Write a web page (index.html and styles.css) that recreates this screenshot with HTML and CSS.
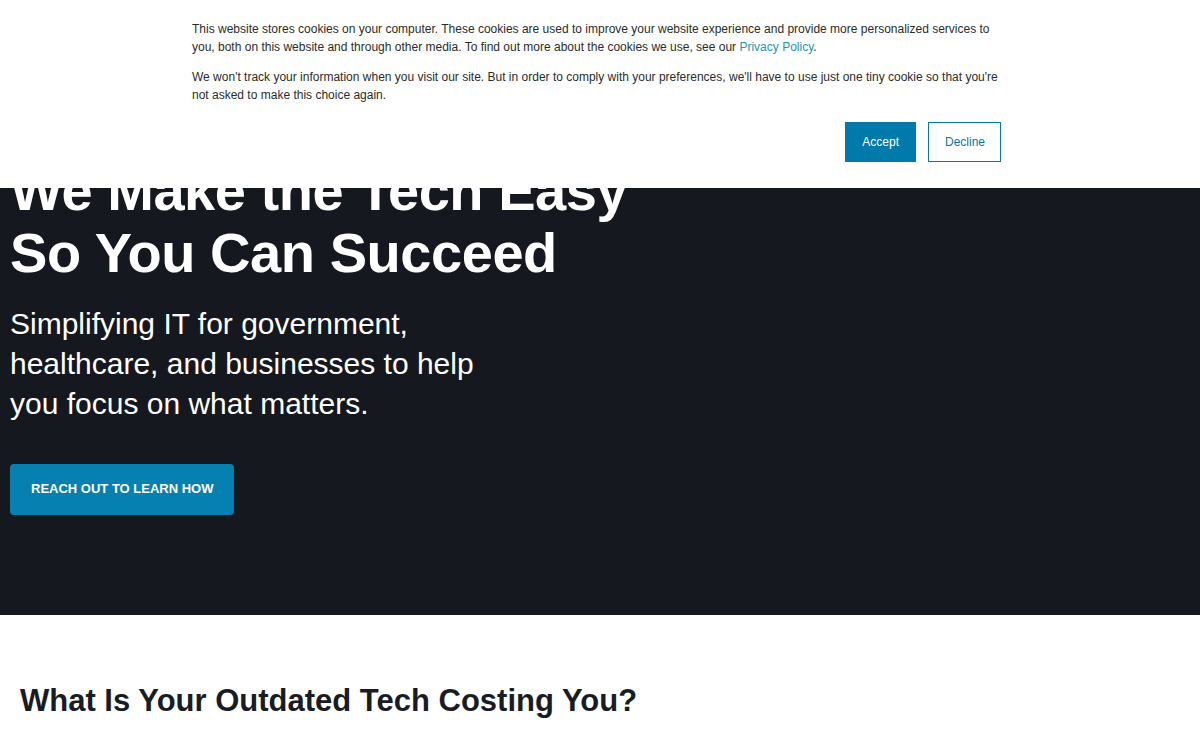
FILE: index.html
```html
<!DOCTYPE html>
<html lang="en">
<head>
<meta charset="utf-8">
<title>We Make the Tech Easy</title>
<link rel="stylesheet" href="styles.css">
</head>
<body>
<section class="hero">
  <h1 class="hero-title">We Make the Tech Easy<br>So You Can Succeed</h1>
  <p class="hero-sub">Simplifying IT for government,<br>healthcare, and businesses to help<br>you focus on what matters.</p>
  <a class="hero-btn" href="#">REACH OUT TO LEARN HOW</a>
</section>
<section class="costs">
  <h2 class="costs-title">What Is Your Outdated Tech Costing You?</h2>
</section>
<div class="cookie-banner">
  <div class="cookie-inner">
    <p class="cookie-text">This website stores cookies on your computer. These cookies are used to improve your website experience and provide more personalized services to you, both on this website and through other media. To find out more about the cookies we use, see our <a class="cookie-link" href="#">Privacy Policy</a>.</p>
    <p class="cookie-text">We won't track your information when you visit our site. But in order to comply with your preferences, we'll have to use just one tiny cookie so that you're not asked to make this choice again.</p>
    <div class="cookie-actions">
      <button class="cookie-btn accept">Accept</button>
      <button class="cookie-btn decline">Decline</button>
    </div>
  </div>
</div>
</body>
</html>
```

FILE: styles.css
```css
* { box-sizing: border-box; }
html, body { margin: 0; padding: 0; }
body {
  font-family: "Liberation Sans", Arial, sans-serif;
  background: #ffffff;
  color: #1a1c24;
  overflow: hidden;
}
.hero {
  background: #16181f;
  color: #ffffff;
  padding: 160px 10px 100px;
}
.hero-title {
  margin: 0;
  font-size: 56px;
  line-height: 62px;
  font-weight: 700;
  letter-spacing: -0.45px;
}
.hero-sub {
  margin: 20px 0 0;
  font-size: 30px;
  line-height: 40px;
  font-weight: 400;
}
.hero-btn {
  display: inline-block;
  margin-top: 40px;
  background: #0580b1;
  color: #ffffff;
  text-decoration: none;
  font-size: 13px;
  font-weight: 700;
  line-height: 15px;
  padding: 17px 21px 19px;
  border-radius: 4px;
}
.costs {
  padding: 67px 20px 60px;
}
.costs-title {
  margin: 0;
  font-size: 31px;
  line-height: 37px;
  font-weight: 700;
  letter-spacing: 0;
  color: #1a1c24;
}
.cookie-banner {
  position: fixed;
  top: 0;
  left: 0;
  right: 0;
  height: 188px;
  background: #ffffff;
}
.cookie-inner {
  width: 809px;
  margin-left: 192px;
  padding-top: 20px;
}
.cookie-text {
  margin: 0 0 12px;
  font-size: 12px;
  line-height: 18px;
  color: #2b2b2b;
}
.cookie-link {
  color: #2196b4;
  text-decoration: none;
}
.cookie-actions {
  display: flex;
  justify-content: flex-end;
  gap: 12px;
  margin-top: 18px;
}
.cookie-btn {
  font-family: "Liberation Sans", Arial, sans-serif;
  font-size: 12px;
  line-height: 38px;
  padding: 0 16px;
  border: 1px solid #0079ab;
  border-radius: 0;
  cursor: pointer;
}
.accept {
  background: #0079ab;
  color: #ffffff;
}
.decline {
  background: #ffffff;
  color: #0079ab;
  padding: 0 15px 0 16px;
}
```
